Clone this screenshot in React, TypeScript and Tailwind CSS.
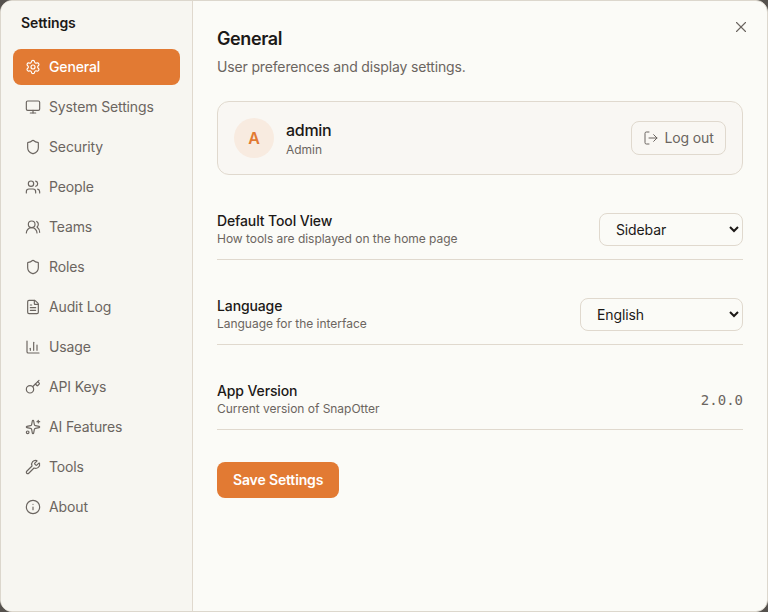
import { Settings, Monitor, Shield, Users, UsersRound, FileText, ChartColumn, Key, Sparkles, Wrench, Info, LogOut, X } from "lucide-react";

const nav = [
  { label: "General", Icon: Settings },
  { label: "System Settings", Icon: Monitor },
  { label: "Security", Icon: Shield },
  { label: "People", Icon: Users },
  { label: "Teams", Icon: UsersRound },
  { label: "Roles", Icon: Shield },
  { label: "Audit Log", Icon: FileText },
  { label: "Usage", Icon: ChartColumn },
  { label: "API Keys", Icon: Key },
  { label: "AI Features", Icon: Sparkles },
  { label: "Tools", Icon: Wrench },
  { label: "About", Icon: Info },
];

function Row({ title, desc, children }: { title: string; desc: string; children: React.ReactNode }) {
  return (
    <div className="box-content flex h-[48px] items-start justify-between border-b border-[#e0d9ce]">
      <div>
        <div className="text-[14px] leading-[20px] font-medium tracking-[-0.12px] text-[#1c1917]">{title}</div>
        <div className="text-[12px] leading-[16px] tracking-[-0.03px] text-[#6b6560]">{desc}</div>
      </div>
      {children}
    </div>
  );
}

export default function App() {
  return (
    <div className="h-[612px] w-[768px] overflow-hidden bg-[#55524e] font-['Inter',sans-serif]">
      <div className="relative flex h-[612px] w-[768px] overflow-hidden rounded-[12px] border border-[#dcd7cd] bg-[#fbfbf7]">
        <aside className="flex w-[192px] shrink-0 flex-col border-r border-[#e0d9ce] bg-[#f7f6f1] px-[12px]">
          <div className="px-[8px] pt-[12px] pb-[16px] text-[14px] leading-[20px] font-semibold tracking-[-0.1px] text-[#1c1917]">Settings</div>
          <nav className="flex flex-col gap-[4px]">
            {nav.map(({ label, Icon }, i) => (
              <div
                key={label}
                className={
                  i === 0
                    ? "flex h-[36px] items-center gap-[8px] rounded-[8px] bg-[#e27a33] px-[12px] text-[14px] font-medium tracking-[-0.13px] text-white"
                    : "flex h-[36px] items-center gap-[8px] rounded-[8px] px-[12px] text-[14px] tracking-[-0.13px] text-[#6b6560]"
                }
              >
                <Icon size={16} strokeWidth={1.75} />
                <span className="mb-[1px]">{label}</span>
              </div>
            ))}
          </nav>
        </aside>
        <main className="flex-1 px-[24px] pt-[24px] text-[#1c1917]">
          <h1 className="text-[18px] leading-[28px] font-semibold tracking-[-0.4px]">General</h1>
          <p className="mt-[4px] text-[14px] leading-[20px] tracking-[-0.15px] text-[#6b6560]">User preferences and display settings.</p>
          <div className="mt-[24px] flex h-[74px] items-center justify-between rounded-[12px] border border-[#e0d9ce] bg-[#f9f7f3] px-[16px]">
            <div className="flex items-center gap-[12px]">
              <div className="flex h-[40px] w-[40px] items-center justify-center rounded-full bg-[#f8ebe0] text-[16px] font-semibold text-[#e27a33]">A</div>
              <div>
                <div className="text-[16px] leading-[24px] font-medium tracking-[-0.3px]">admin</div>
                <div className="text-[12px] leading-[16px] tracking-[-0.03px] text-[#6b6560]">Admin</div>
              </div>
            </div>
            <button className="flex h-[34px] w-[95px] items-center justify-center gap-[5px] rounded-[8px] border border-[#e0d9ce] text-[14px] tracking-[-0.13px] text-[#6b6560]">
              <LogOut size={16} strokeWidth={1.5} />
              <span className="mb-[1px]">Log out</span>
            </button>
          </div>
          <div className="mt-[36px] flex flex-col gap-[36px]">
            <Row title="Default Tool View" desc="How tools are displayed on the home page">
              <select defaultValue="Sidebar" className="mt-[2px] h-[33px] w-[144px] rounded-[8px] border border-[#e0d9ce] bg-[#fbfbf7] px-[12px] text-[14px] tracking-[-0.13px] text-[#1c1917]">
                <option>Sidebar</option>
                <option>Fullscreen</option>
              </select>
            </Row>
            <Row title="Language" desc="Language for the interface">
              <select defaultValue="English" className="mt-[2px] h-[33px] w-[163px] rounded-[8px] border border-[#e0d9ce] bg-[#fbfbf7] px-[12px] text-[14px] tracking-[-0.13px] text-[#1c1917]">
                <option>English</option>
                <option>Deutsch</option>
              </select>
            </Row>
            <Row title="App Version" desc="Current version of SnapOtter">
              <span className="pt-[9px] font-['DejaVu_Sans_Mono',monospace] text-[14px] leading-[20px] text-[#6b6560]">2.0.0</span>
            </Row>
          </div>
          <button className="mt-[32px] h-[36px] rounded-[8px] bg-[#e27a33] px-[16px] pb-[1px] text-[14px] font-semibold tracking-[-0.15px] text-white">Save Settings</button>
        </main>
        <X size={18} strokeWidth={1.5} className="absolute top-[17px] right-[17px] text-[#6b6560]" />
      </div>
    </div>
  );
}
